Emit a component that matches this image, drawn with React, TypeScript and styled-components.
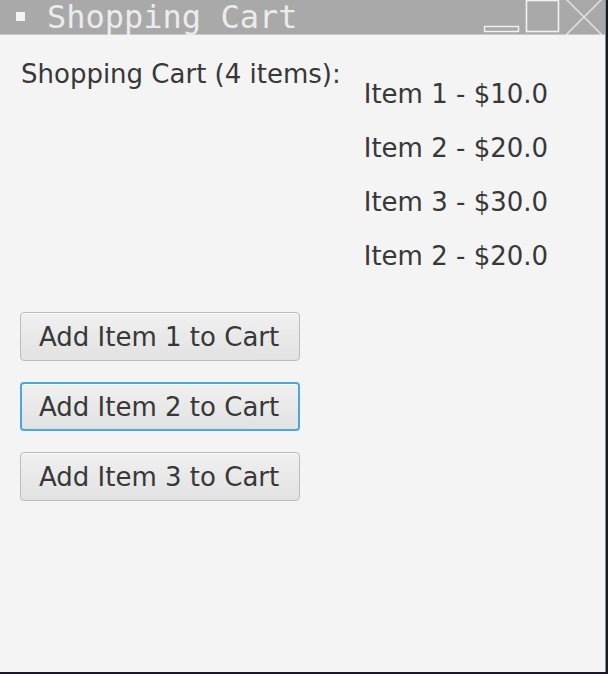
import React from "react";
import styled, { createGlobalStyle } from "styled-components";

const Global = createGlobalStyle`
  html, body { margin: 0; padding: 0; background: #151a26; }
  body { width: 608px; height: 674px; overflow: hidden; }
`;

const Frame = styled.div`
  width: 605px;
  height: 672px;
  border-right: 1px solid #8c8c8c;
  background: #f4f4f4;
  display: flex;
  flex-direction: column;
  box-sizing: content-box;
`;

const TitleBar = styled.div`
  height: 35px;
  background: #a9a9a9;
  border-bottom: 1px solid #c9c9c9;
  display: flex;
  align-items: center;
  box-sizing: border-box;
`;

const TitleIcon = styled.div`
  flex-shrink: 0;
  width: 9px;
  height: 9px;
  background: #f4f4f4;
  margin: 0 22px 2px 16px;
`;

const TitleText = styled.div`
  flex: 1;
  font-family: "DejaVu Sans Mono", monospace;
  font-size: 32px;
  color: #ececec;
  line-height: 1;
  white-space: nowrap;
  margin-top: -1px;
`;

const Controls = styled.svg`
  flex-shrink: 0;
  align-self: flex-start;
  display: block;
`;

const Content = styled.div`
  flex: 1;
  padding: 20px 20px;
  display: flex;
  flex-direction: column;
  font-family: "DejaVu Sans", sans-serif;
  font-size: 26px;
  color: #383838;
`;

const TopRow = styled.div`
  display: flex;
  align-items: flex-start;
`;

const CartLabel = styled.div`
  margin-left: 1px;
  line-height: 38px;
  white-space: nowrap;
`;

const ItemList = styled.ul`
  list-style: none;
  margin: 21px 0 0 23px;
  padding: 0;
  display: flex;
  flex-direction: column;
`;

const ItemRow = styled.li`
  height: 54px;
  line-height: 36px;
  white-space: nowrap;
`;

const ButtonColumn = styled.div`
  display: flex;
  flex-direction: column;
  gap: 21px;
  margin-top: 20px;
`;

const CartButton = styled.button<{ $focused?: boolean }>`
  width: 280px;
  height: 49px;
  box-sizing: border-box;
  border-radius: 4px;
  border: ${(p) => (p.$focused ? "2px solid #4ba8dd" : "1px solid #bcbcbc")};
  background: linear-gradient(#f0f0f0, #e2e2e2);
  box-shadow: inset 0 1px 0 #fafafa;
  font-family: "DejaVu Sans", sans-serif;
  font-size: 26px;
  color: #383838;
  text-align: left;
  padding: 0 0 0 ${(p) => (p.$focused ? "17px" : "18px")};
  cursor: pointer;
`;

const items = [
  "Item 1 - $10.0",
  "Item 2 - $20.0",
  "Item 3 - $30.0",
  "Item 2 - $20.0",
];

export default function App() {
  return (
    <>
      <Global />
      <Frame>
        <TitleBar>
          <TitleIcon />
          <TitleText>Shopping Cart</TitleText>
          <Controls width="124" height="35" viewBox="0 0 124 35">
            <rect x="3.5" y="26.5" width="34" height="5" fill="none" stroke="#f2f2f2" strokeWidth="1.4" />
            <rect x="45.5" y="0.5" width="32" height="31" fill="none" stroke="#f2f2f2" strokeWidth="1.6" />
            <path d="M85 -1 L121 35 M121 -1 L85 35" stroke="#e6e6e6" strokeWidth="1.4" />
          </Controls>
        </TitleBar>
        <Content>
          <TopRow>
            <CartLabel>Shopping Cart (4 items):</CartLabel>
            <ItemList>
              {items.map((it, i) => (
                <ItemRow key={i}>{it}</ItemRow>
              ))}
            </ItemList>
          </TopRow>
          <ButtonColumn>
            <CartButton>Add Item 1 to Cart</CartButton>
            <CartButton $focused>Add Item 2 to Cart</CartButton>
            <CartButton>Add Item 3 to Cart</CartButton>
          </ButtonColumn>
        </Content>
      </Frame>
    </>
  );
}
